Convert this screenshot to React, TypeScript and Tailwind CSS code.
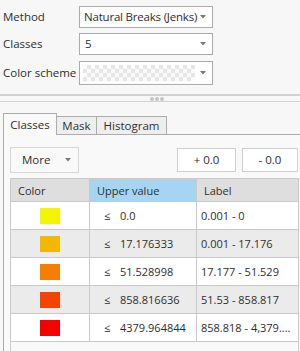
import type { ReactNode } from 'react';

const ROWS = [
  { color: 'bg-[#f5f500]', value: '0.0', label: '0.001 - 0' },
  { color: 'bg-[#f5b800]', value: '17.176333', label: '0.001 - 17.176' },
  { color: 'bg-[#f77f00]', value: '51.528998', label: '17.177 - 51.529' },
  { color: 'bg-[#f54400]', value: '858.816636', label: '51.53 - 858.817' },
  { color: 'bg-[#f50000]', value: '4379.964844', label: '858.818 - 4,379....' },
];

function Caret() {
  return (
    <svg width="6" height="4" viewBox="0 0 6 4" className="shrink-0">
      <polygon points="0,0 6,0 3,3.5" fill="#7a7a7a" />
    </svg>
  );
}

function Select({ children, tall }: { children: ReactNode; tall?: boolean }) {
  return (
    <div
      className={
        'w-[134px] flex items-center justify-between bg-white border border-[#ababab] pl-[4px] pr-[6px] whitespace-nowrap ' +
        (tall ? 'h-[24px]' : 'h-[22px]')
      }
    >
      {children}
      <Caret />
    </div>
  );
}

function Field({ label, children }: { label: string; children: ReactNode }) {
  return (
    <div className="flex items-center">
      <span className="w-[79px] pl-[3px] whitespace-nowrap">{label}</span>
      {children}
    </div>
  );
}

export default function App() {
  return (
    <div className="w-[300px] h-[351px] overflow-hidden bg-[#f7f7f7] text-[11.5px] leading-none text-[#2e2e2e] whitespace-nowrap font-['Segoe_UI','Open_Sans',sans-serif]">
      {/* Top form */}
      <div className="flex flex-col gap-[5px] pt-[6px]">
        <Field label="Method">
          <Select>
            <span className="tracking-[-0.2px]">Natural Breaks (Jenks)</span>
          </Select>
        </Field>
        <Field label="Classes">
          <Select>
            <span className="pl-[1px]">5</span>
          </Select>
        </Field>
        <div className="mt-[1px]">
          <Field label="Color scheme">
            <Select tall>
              <div className="h-[16px] w-[112px] ml-[-1px] bg-[conic-gradient(#e6e6e6_25%,#fbfbfb_0_50%,#e6e6e6_0_75%,#fbfbfb_0)] bg-[length:8px_8px]" />
            </Select>
          </Field>
        </div>
      </div>

      {/* Splitter */}
      <div className="mt-[9px] flex flex-col">
        <div className="h-[2px] bg-[#d2d2d2]" />
        <div className="h-[5px] flex items-center justify-center gap-[1px] pl-[14px]">
          <span className="w-[4px] h-[4px] rounded-full bg-[#c4c4c4]" />
          <span className="w-[4px] h-[4px] rounded-full bg-[#c4c4c4]" />
          <span className="w-[4px] h-[4px] rounded-full bg-[#c4c4c4]" />
        </div>
        <div className="h-[1px] bg-[#d2d2d2]" />
      </div>

      {/* Tabs */}
      <div className="mt-[11px] ml-[3px] flex items-end">
        <div className="h-[22px] w-[54px] flex items-center justify-center border border-b-0 border-[#acacac] bg-[#f9f9f9]">
          Classes
        </div>
        <div className="h-[19px] w-[40px] flex items-center justify-center border border-l-0 border-[#acacac] bg-[#eeeeee]">
          Mask
        </div>
        <div className="h-[19px] w-[70px] flex items-center justify-center border border-l-0 border-[#acacac] bg-[#eeeeee]">
          Histogram
        </div>
        <div className="flex-1 border-b border-[#acacac]" />
      </div>

      {/* Panel */}
      <div className="ml-[3px] h-[220px] border-l border-[#acacac] bg-[#f9f9f9] pl-[6px] pt-[12px]">
        <div className="flex items-center">
          <div className="w-[69px] h-[26px] flex items-center justify-between border border-[#d6d6d6] bg-[#f9f9f9] pl-[11px] pr-[7px]">
            <span>More</span>
            <Caret />
          </div>
          <div className="ml-auto flex gap-[6px] mr-[2px]">
            <div className="w-[59px] h-[24px] flex items-center justify-center border border-[#cfcfcf] bg-white">
              + 0.0
            </div>
            <div className="w-[56px] h-[24px] flex items-center justify-center border border-[#cfcfcf] bg-white">
              - 0.0
            </div>
          </div>
        </div>

        {/* Table */}
        <div className="mt-[5px] w-[289px] h-[200px] border-x border-t border-[#c9c9c9] bg-[#f9f9f9] text-[11px]">
          <div className="grid grid-cols-[79px_107px_1fr] h-[23px] bg-[#dedede] border-b border-[#c9c9c9]">
            <div className="flex items-center pl-[7px] border-r border-[#c9c9c9]">Color</div>
            <div className="flex items-center pl-[7px] bg-[#a6d5f2] border-r border-[#c9c9c9]">Upper value</div>
            <div className="flex items-center pl-[7px]">Label</div>
          </div>
          {ROWS.map((r, i) => (
            <div
              key={r.value}
              className={
                'grid grid-cols-[79px_107px_1fr] h-[28px] border-b border-[#c9c9c9] ' +
                (i % 2 === 0 ? 'bg-white' : 'bg-[#ebebeb]')
              }
            >
              <div className="flex items-center justify-center border-r border-[#c9c9c9] pr-[1px]">
                <div className={'w-[20px] h-[16px] ' + r.color} />
              </div>
              <div className="flex items-center pl-[14px] border-r border-[#c9c9c9]">
                <span className="w-[16px]">≤</span>
                <span>{r.value}</span>
              </div>
              <div className="flex items-center pl-[4px] overflow-hidden">{r.label}</div>
            </div>
          ))}
        </div>
      </div>
    </div>
  );
}
